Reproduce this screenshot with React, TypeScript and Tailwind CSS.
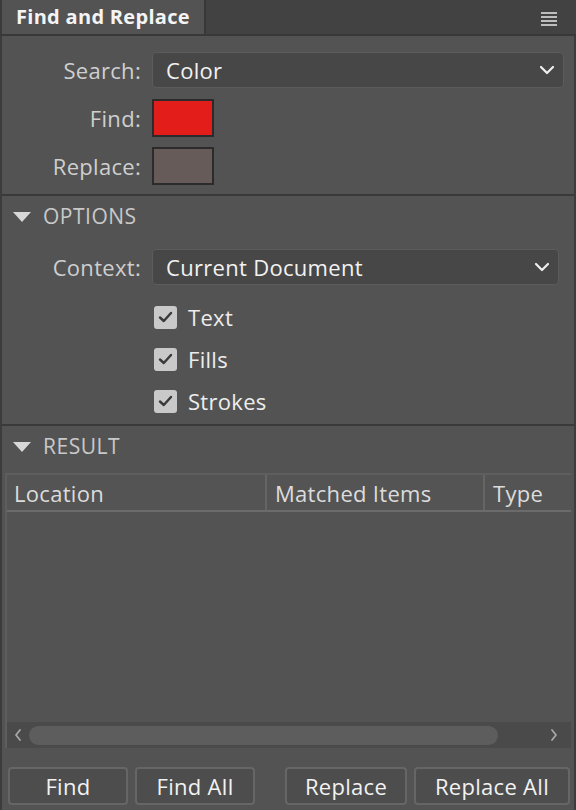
import React from "react";

function Chevron({ className = "" }: { className?: string }) {
  return (
    <svg width="16" height="10" viewBox="0 0 16 10" className={className}>
      <path d="M2 2 L8 8 L14 2" fill="none" stroke="#f0f0f0" strokeWidth="2.2" strokeLinecap="round" strokeLinejoin="round" />
    </svg>
  );
}

function Tri() {
  return (
    <svg width="18" height="10" viewBox="0 0 18 10">
      <path d="M0 0 L18 0 L9 10 Z" fill="#d8d8d8" />
    </svg>
  );
}

function Check({ label }: { label: string }) {
  return (
    <div className="flex items-center h-[42px]">
      <div className="w-[23px] h-[23px] rounded-[3px] bg-[#c9c9c9] flex items-center justify-center">
        <svg width="15" height="12" viewBox="0 0 15 12">
          <path d="M2 6.5 L5.8 10 L13 2" fill="none" stroke="#3a3a3a" strokeWidth="2.4" strokeLinecap="round" strokeLinejoin="round" />
        </svg>
      </div>
      <span className="ml-[11px] text-[22px] tracking-[0.3px] text-[#ededed] leading-none">{label}</span>
    </div>
  );
}

function Select({ value }: { value: string }) {
  return (
    <div className="flex-1 h-[36px] rounded-[4px] bg-[#474747] border border-[#5c5c5c] flex items-center justify-between pl-[13px] pr-[8px]">
      <span className="text-[22px] tracking-[0.3px] text-[#f2f2f2] leading-none">{value}</span>
      <Chevron />
    </div>
  );
}

function Btn({ label, w }: { label: string; w: string }) {
  return (
    <div className={`${w} h-[38px] rounded-[4px] border-2 border-[#666666] bg-[#4d4d4d] flex items-center justify-center text-[22px] tracking-[0.3px] text-[#f2f2f2] leading-none`}>
      {label}
    </div>
  );
}

function Label({ children }: { children: React.ReactNode }) {
  return (
    <div className="w-[139px] text-right text-[22px] tracking-[0.3px] text-[#cfcfcf] leading-none">{children}</div>
  );
}

export default function App() {
  return (
    <div
      className="w-[576px] h-[810px] bg-[#3b3b3b] flex flex-col overflow-hidden"
      style={{ fontFamily: "'Open Sans', Lato, sans-serif" }}
    >
      {/* tab bar */}
      <div className="h-[36px] flex bg-[#424242] border-b-2 border-[#383838]">
        <div className="w-[204px] bg-[#535353] border-l-2 border-[#3a3a3a] flex items-center pl-[14px]">
          <span className="text-[20px] font-bold tracking-[0.3px] text-[#f4f4f4] leading-none">Find and Replace</span>
        </div>
        <div className="flex-1 border-l-2 border-[#383838] flex items-start justify-end pr-[19px] pt-[12px]">
          <div className="flex flex-col gap-[2px]">
            <div className="w-[16px] h-[2px] bg-[#bdbdbd]" />
            <div className="w-[16px] h-[2px] bg-[#bdbdbd]" />
            <div className="w-[16px] h-[2px] bg-[#bdbdbd]" />
            <div className="w-[16px] h-[2px] bg-[#bdbdbd]" />
          </div>
        </div>
      </div>

      <div className="flex-1 bg-[#535353] border-l-2 border-r-2 border-[#3c3c3c] flex flex-col">
        {/* search section */}
        <div className="pt-[16px] pb-[10px] pr-[10px] flex flex-col gap-[11px]">
          <div className="flex items-center">
            <Label>Search:</Label>
            <div className="ml-[11px] flex-1 flex">
              <Select value="Color" />
            </div>
          </div>
          <div className="flex items-center h-[37px]">
            <Label>Find:</Label>
            <div className="ml-[11px] w-[62px] h-[38px] bg-[#e31e1a] border-2 border-[#2b2b2b]" />
          </div>
          <div className="flex items-center h-[37px]">
            <Label>Replace:</Label>
            <div className="ml-[11px] w-[62px] h-[38px] bg-[#675b59] border-2 border-[#2b2b2b]" />
          </div>
        </div>
        <div className="h-[2px] bg-[#3a3a3a]" />

        {/* options */}
        <div className="h-[228px] flex flex-col pr-[12px]">
          <div className="h-[41px] flex items-center pl-[11px]">
            <Tri />
            <span className="ml-[12px] text-[21px] tracking-[0.5px] text-[#c9c9c9] leading-none">OPTIONS</span>
          </div>
          <div className="flex items-center mt-[12px] pr-[3px]">
            <Label>Context:</Label>
            <div className="ml-[11px] flex-1 flex">
              <Select value="Current Document" />
            </div>
          </div>
          <div className="mt-[11px] pl-[152px] flex flex-col">
            <Check label="Text" />
            <Check label="Fills" />
            <Check label="Strokes" />
          </div>
        </div>
        <div className="h-[2px] bg-[#3a3a3a]" />

        {/* result */}
        <div className="flex-1 flex flex-col">
          <div className="h-[41px] flex items-center pl-[11px]">
            <Tri />
            <span className="ml-[12px] text-[21px] tracking-[0.5px] text-[#c9c9c9] leading-none">RESULT</span>
          </div>
          <div className="mt-[6px] mx-[3px] h-[275px] flex flex-col border-t-2 border-l-2 border-[#5e5e5e]">
            <div className="h-[37px] flex items-center border-b-2 border-[#6b6b6b] bg-[#545454] text-[22px] tracking-[0.3px] text-[#dcdcdc] leading-none">
              <div className="w-[260px] pl-[7px] h-full flex items-center border-r-2 border-[#656565]">Location</div>
              <div className="w-[218px] pl-[8px] h-full flex items-center border-r-2 border-[#656565]">Matched Items</div>
              <div className="flex-1 pl-[8px] h-full flex items-center">Type</div>
            </div>
            <div className="flex-1 bg-[#535353]" />
            <div className="h-[26px] bg-[#4a4a4a] flex items-center px-[6px]">
              <svg width="10" height="14" viewBox="0 0 10 14">
                <path d="M7 2 L3 7 L7 12" fill="none" stroke="#a8a8a8" strokeWidth="1.8" strokeLinecap="round" strokeLinejoin="round" />
              </svg>
              <div className="ml-[6px] w-[469px] h-[19px] rounded-full bg-[#5d5d5d]" />
              <div className="flex-1" />
              <svg width="10" height="14" viewBox="0 0 10 14">
                <path d="M3 2 L7 7 L3 12" fill="none" stroke="#a8a8a8" strokeWidth="1.8" strokeLinecap="round" strokeLinejoin="round" />
              </svg>
              <div className="w-[6px]" />
            </div>
          </div>
          <div className="mt-[19px] flex pl-[6px]">
            <Btn label="Find" w="w-[120px]" />
            <div className="w-[7px]" />
            <Btn label="Find All" w="w-[120px]" />
            <div className="w-[30px]" />
            <Btn label="Replace" w="w-[122px]" />
            <div className="w-[7px]" />
            <Btn label="Replace All" w="w-[156px]" />
          </div>
        </div>
      </div>
    </div>
  );
}
